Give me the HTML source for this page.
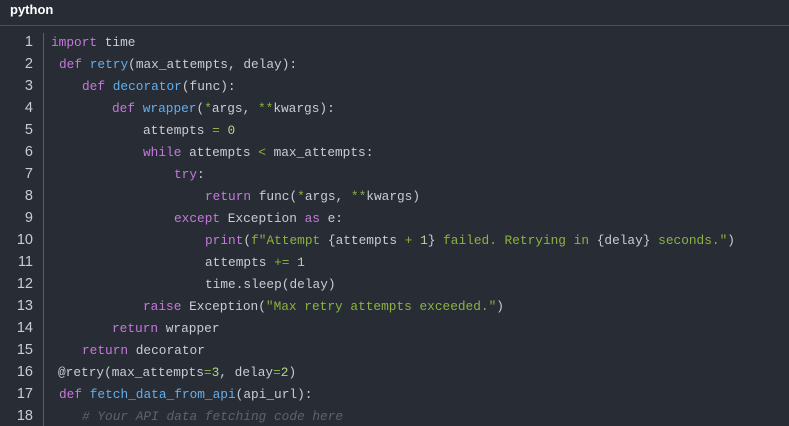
<!DOCTYPE html>
<html><head><meta charset="utf-8"><style>
html,body{margin:0;padding:0;background:#282c34;width:789px;height:426px;overflow:hidden}
.hdr{position:absolute;left:0;top:0;width:789px;height:25px;border-bottom:1px solid #4a4f58;}
.hdr span{position:absolute;left:10px;top:2px;font:bold 13px "Liberation Sans",sans-serif;color:#fff}
.gut{position:absolute;left:43px;top:33px;width:1px;height:393px;background:#5a5f68}
.n{position:absolute;width:33px;text-align:right;left:0;font:14.5px "Liberation Sans",sans-serif;color:#c8ccd4}
.l{position:absolute;font:12.8px "Liberation Mono",monospace;color:#c8ccd4;white-space:pre}
.k{color:#c678dd}.f{color:#61afef}.s{color:#8ab33f}.o{color:#8ab33f}.num{color:#b5d68a}.c{color:#5c6370;font-style:italic}
</style></head><body>
<div class="hdr"><span>python</span></div>
<div class="gut"></div>
<div class="n" style="top:34px">1</div>
<div class="n" style="top:56px">2</div>
<div class="n" style="top:78px">3</div>
<div class="n" style="top:100px">4</div>
<div class="n" style="top:122px">5</div>
<div class="n" style="top:144px">6</div>
<div class="n" style="top:166px">7</div>
<div class="n" style="top:188px">8</div>
<div class="n" style="top:210px">9</div>
<div class="n" style="top:232px">10</div>
<div class="n" style="top:254px">11</div>
<div class="n" style="top:276px">12</div>
<div class="n" style="top:298px">13</div>
<div class="n" style="top:320px">14</div>
<div class="n" style="top:342px">15</div>
<div class="n" style="top:364px">16</div>
<div class="n" style="top:386px">17</div>
<div class="n" style="top:408px">18</div>

<div class="l" style="left:51px;top:35px"><span class="k">import</span> time</div>
<div class="l" style="left:59px;top:57px"><span class="k">def</span> <span class="f">retry</span>(max_attempts, delay):</div>
<div class="l" style="left:82px;top:79px"><span class="k">def</span> <span class="f">decorator</span>(func):</div>
<div class="l" style="left:112px;top:101px"><span class="k">def</span> <span class="f">wrapper</span>(<span class="o">*</span>args, <span class="o">**</span>kwargs):</div>
<div class="l" style="left:143px;top:123px">attempts <span class="o">=</span> <span class="num">0</span></div>
<div class="l" style="left:143px;top:145px"><span class="k">while</span> attempts <span class="o">&lt;</span> max_attempts:</div>
<div class="l" style="left:174px;top:167px"><span class="k">try</span>:</div>
<div class="l" style="left:205px;top:189px"><span class="k">return</span> func(<span class="o">*</span>args, <span class="o">**</span>kwargs)</div>
<div class="l" style="left:174px;top:211px"><span class="k">except</span> Exception <span class="k">as</span> e:</div>
<div class="l" style="left:205px;top:233px"><span class="k">print</span>(<span class="s">f"Attempt </span>{attempts <span class="o">+</span> <span class="num">1</span>}<span class="s"> failed. Retrying in </span>{delay}<span class="s"> seconds."</span>)</div>
<div class="l" style="left:205px;top:255px">attempts <span class="o">+=</span> <span class="num">1</span></div>
<div class="l" style="left:205px;top:277px">time.sleep(delay)</div>
<div class="l" style="left:143px;top:299px"><span class="k">raise</span> Exception(<span class="s">"Max retry attempts exceeded."</span>)</div>
<div class="l" style="left:112px;top:321px"><span class="k">return</span> wrapper</div>
<div class="l" style="left:82px;top:343px"><span class="k">return</span> decorator</div>
<div class="l" style="left:58px;top:365px">@retry(max_attempts<span class="o">=</span><span class="num">3</span>, delay<span class="o">=</span><span class="num">2</span>)</div>
<div class="l" style="left:59px;top:387px"><span class="k">def</span> <span class="f">fetch_data_from_api</span>(api_url):</div>
<div class="l" style="left:82px;top:409px"><span class="c"># Your API data fetching code here</span></div>
</body></html>
